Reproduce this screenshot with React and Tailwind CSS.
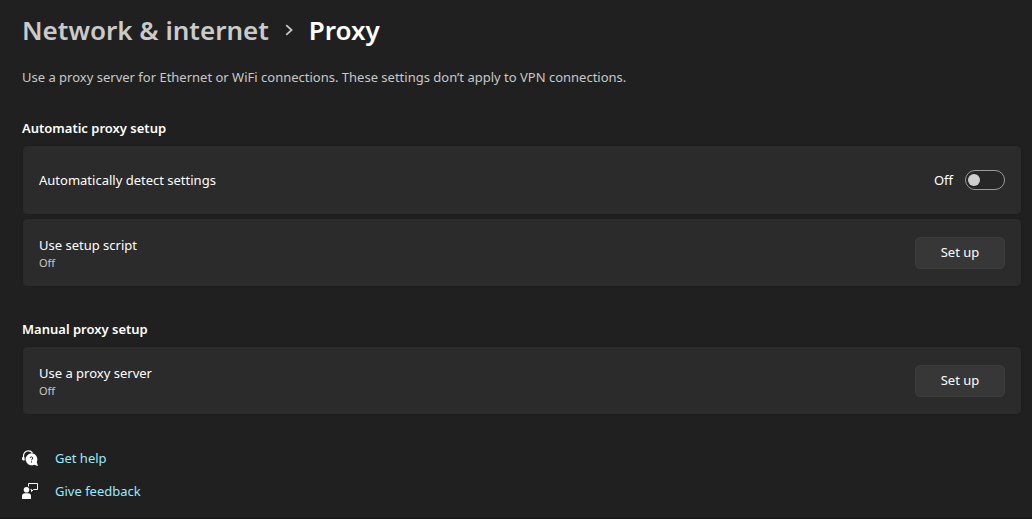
import { useState } from "react";

function HelpIcon() {
  return (
    <svg viewBox="0 0 16 16" className="size-4 shrink-0 text-white" aria-hidden="true">
      <path d="M1.5 8V6A4.900 4.900 0 0 1 6.300 .8C8.200 .8 9.700 1.700 10.500 3" fill="none" stroke="currentColor" strokeWidth="1.200" />
      <path d="M0 7.200h2.600v3.300H1.400A1.400 1.400 0 0 1 0 9.100z" fill="currentColor" />
      <path
        d="M9.400 3.300a6 6 0 0 1 5.300 8.700L16 16l-4-1.200A6 6 0 1 1 9.400 3.300z"
        fill="currentColor"
      />
      <path
        d="M8.200 8.100C8.200 7.300 8.700 6.900 9.500 6.900s1.300.5 1.300 1.200c0 1-1.300 1.100-1.300 2.200M9.500 11.300v1.200"
        fill="none"
        stroke="#202020"
        strokeWidth="1"
      />
    </svg>
  );
}

function FeedbackIcon() {
  return (
    <svg viewBox="0 0 16 16" className="size-4 shrink-0 text-white" aria-hidden="true">
      <path d="M6.500 3.500V.5h9v6h-4L9.500 8.500v-2H8.500" fill="none" stroke="currentColor" strokeWidth="1" />
      <circle cx="4.500" cy="6.700" r="2.800" fill="currentColor" />
      <path d="M0 16v-2.800a3 3 0 0 1 3-3h3a3 3 0 0 1 3 3V16z" fill="currentColor" />
    </svg>
  );
}

function Section({ title, children }) {
  return (
    <section>
      <h2 className="text-[13px] leading-5 font-semibold text-white">{title}</h2>
      <div className="mt-[7px] flex flex-col gap-[3px]">{children}</div>
    </section>
  );
}

function Card({ heightClass = "min-h-[69px]", children }) {
  return (
    <div
      className={`flex items-center justify-between rounded-[5px] border border-[#1d1d1d] bg-[#2b2b2b] px-4 ${heightClass}`}
    >
      {children}
    </div>
  );
}

function SetupCard({ label, status }) {
  return (
    <Card>
      <div>
        <p className="leading-5 text-white">{label}</p>
        <p className="text-[11px] leading-4 text-[#c8c8c8]">{status}</p>
      </div>
      <button
        type="button"
        aria-label={`Set up: ${label}`}
        className="h-8 w-[90px] rounded-[5px] border border-[#3c3c3c] bg-[#373737] text-white"
      >
        Set up
      </button>
    </Card>
  );
}

export default function App() {
  const [detect, setDetect] = useState(false);
  return (
    <main className="min-h-screen border-b border-[#171717] bg-[#202020] pt-[14px] pr-[10px] pl-[22px] font-['Noto_Sans','Open_Sans',sans-serif] text-[13px]">
      <nav aria-label="Breadcrumb" className="flex items-center text-[26px] leading-8 font-semibold">
        <a href="#network" className="text-[#cacaca]">
          Network &amp; internet
        </a>
        <svg viewBox="0 0 8 12" className="mx-4 h-3 w-2 text-[#cacaca]" aria-hidden="true">
          <path d="M1.200 1.200L6.600 6L1.200 10.800" fill="none" stroke="currentColor" strokeWidth="1.700" />
        </svg>
        <h1 className="text-white">Proxy</h1>
      </nav>
      <p className="mt-[21px] leading-5 text-[#c8c8c8]">
        Use a proxy server for Ethernet or WiFi connections. These settings don’t apply to VPN connections.
      </p>

      <div className="mt-[31px] flex flex-col gap-8">
        <Section title="Automatic proxy setup">
          <Card heightClass="min-h-[70px]">
            <label htmlFor="detect" className="leading-5 text-white">
              Automatically detect settings
            </label>
            <div className="flex items-center gap-3 text-white">
              <span className="leading-5">{detect ? "On" : "Off"}</span>
              <input
                id="detect"
                type="checkbox"
                role="switch"
                checked={detect}
                onChange={(e) => setDetect(e.target.checked)}
                className="flex h-5 w-10 appearance-none items-center rounded-full border border-[#9a9a9a] bg-[#262626] px-[2px] before:size-3 before:rounded-full before:bg-[#cfcfcf] before:content-[''] checked:justify-end checked:bg-[#4cc2ff] checked:before:bg-black"
              />
            </div>
          </Card>
          <SetupCard label="Use setup script" status="Off" />
        </Section>
        <Section title="Manual proxy setup">
          <SetupCard label="Use a proxy server" status="Off" />
        </Section>
      </div>

      <div className="mt-[33px] flex flex-col items-start gap-[13px] leading-5 text-[#99ebff]">
        <a href="#help" className="flex items-center gap-[17px]">
          <HelpIcon />
          Get help
        </a>
        <a href="#feedback" className="flex items-center gap-[17px]">
          <FeedbackIcon />
          Give feedback
        </a>
      </div>
    </main>
  );
}
